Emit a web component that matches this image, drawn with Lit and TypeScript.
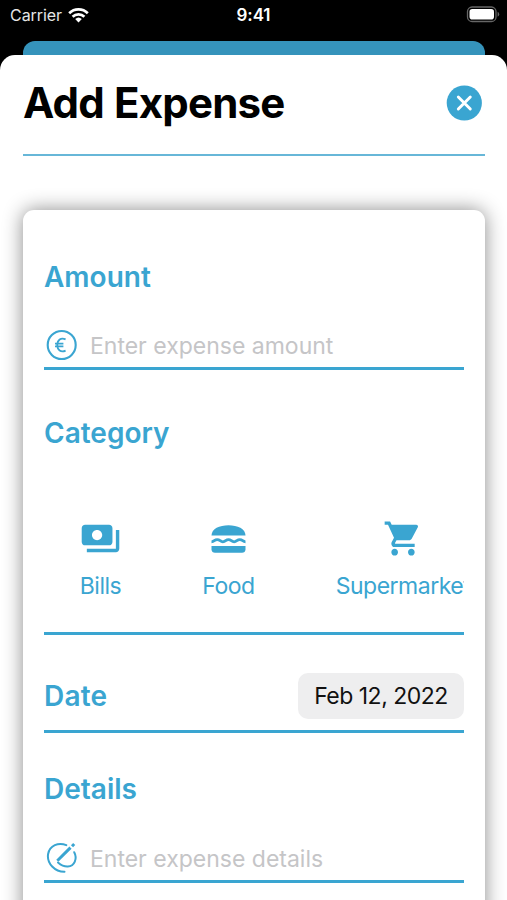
import { LitElement, html, css, svg } from "lit";
import { customElement } from "lit/decorators.js";

const wifi = svg`<svg width="21" height="16" viewBox="0 0 21 16"><g fill="none" stroke="#fff" stroke-width="2.7"><path d="M1.2 6.2 A13.2 13.2 0 0 1 19.8 6.2"/><path d="M4.6 9.7 A8.4 8.4 0 0 1 16.4 9.7"/></g><path d="M10.5 15.4 L7.2 12 A4.8 4.8 0 0 1 13.8 12 Z" fill="#fff"/></svg>`;
const battery = svg`<svg width="34" height="17" viewBox="0 0 34 17"><rect x="1.500" y="1" width="28.5" height="14.5" rx="4.6" fill="none" stroke="#666" stroke-width="1.3"/><rect x="3.500" y="3" width="24.5" height="10.5" rx="2.8" fill="#fff"/><path d="M31.6 5.8 q1.6 .8 1.6 2.5 t-1.6 2.5z" fill="#666"/></svg>`;
const close = svg`<svg width="36" height="36" viewBox="0 0 36 36"><circle cx="18.3" cy="18" r="17.600" fill="#3aa5d1"/><path d="M12.3 12 L24.3 24 M24.3 12 L12.3 24" stroke="#fff" stroke-width="2.9" stroke-linecap="round"/></svg>`;
const euro = svg`<svg width="32" height="32" viewBox="0 0 32 32" fill="none" stroke="#3aa5d1"><circle cx="15.7" cy="16" r="14" stroke-width="2.1"/><path d="M19.6 10.4 C14.8 8 11.3 11.2 11.3 16 C11.3 20.8 14.8 24 19.6 21.600 M9 14.6 H17.4 M9 17.4 H17.4" stroke-width="1.8"/></svg>`;
const pen = svg`<svg width="32" height="32" viewBox="0 0 32 32" fill="none" stroke="#3aa5d1" stroke-width="2" stroke-linecap="round"><path d="M20.3 3.2 C12.5 -.2 3.6 3.6 2.1 12 C.6 21.5 9 29.8 18.5 29.7"/><path d="M28.2 10.2 C31.6 16.5 28.6 24.2 21.8 24.6 C17.8 24.8 14.5 22.7 12 20.5"/><path d="M11.300 18.800 L24.500 5.600" stroke-width="3" stroke-linecap="butt"/><path d="M26 4.200 L28.2 2" stroke-width="3" stroke-linecap="butt"/></svg>`;
const bills = svg`<svg width="41" height="41" viewBox="0 0 24 24" fill="#3aa5d1"><path fill-rule="evenodd" d="M19 14V6c0-1.100-.9-2-2-2H3c-1.100 0-2 .9-2 2v8c0 1.100.9 2 2 2h14c1.100 0 2-.9 2-2zm-9-1c-1.660 0-3-1.340-3-3s1.340-3 3-3 3 1.340 3 3-1.340 3-3 3zm13-6v11c0 1.100-.9 2-2 2H4v-2h17V7h2z"/></svg>`;
const burger = svg`<svg width="35" height="28" viewBox="0 0 35 28" fill="#3aa5d1"><path d="M.5 10.600 C.5 3.800 8.500 .3 17.500 .3 S34.500 3.800 34.500 10.600 Z"/><path d="M.5 21 H34.500 V24.200 C34.500 26.500 33 27.800 31 27.800 H4 C2 27.800 .5 26.500 .5 24.200 Z"/><path d="M.5 16.800 C3.300 16.800 3.300 14.600 6.200 14.600 S9.100 16.800 11.900 16.800 S14.700 14.600 17.500 14.600 S20.300 16.800 23.100 16.800 S25.900 14.600 28.800 14.600 S31.700 16.800 34.500 16.800" fill="none" stroke="#3aa5d1" stroke-width="2.800"/></svg>`;
const cart = svg`<svg width="40" height="41" viewBox="0 0 24 24" preserveAspectRatio="none" fill="#3aa5d1"><path d="M7 18c-1.100 0-1.990.9-1.990 2S5.900 22 7 22s2-.9 2-2-.9-2-2-2zM1 2v2h2l3.600 7.590-1.350 2.450c-.16.28-.25.61-.25.96 0 1.100.9 2 2 2h12v-2H7.420c-.14 0-.25-.11-.25-.25l.03-.12.9-1.630h7.450c.75 0 1.410-.41 1.750-1.030l3.580-6.490c.08-.14.12-.31.12-.48 0-.55-.45-1-1-1H5.210l-.94-2H1zm16 16c-1.100 0-1.990.9-1.990 2s.89 2 1.990 2 2-.9 2-2-.9-2-2-2z"/></svg>`;

@customElement("app-root")
export class AppRoot extends LitElement {
  static styles = css`
    :host { display: block; height: 900px; overflow: hidden; background: #000; color: #000; font-family: Inter, "Liberation Sans", sans-serif; }
    * { box-sizing: border-box; white-space: nowrap; }
    svg { display: block; flex: none; }
    .status { height: 41px; padding: 0 7px 11px 10px; display: grid; grid-template-columns: 1fr auto 1fr; align-items: center; color: #fff; }
    .carrier { display: flex; align-items: center; gap: 6px; font-size: 16px; letter-spacing: -.05px; color: #e6e6e6; }
    .time { font-size: 17px; font-weight: 600; letter-spacing: -.1px; margin-right: 3px; }
    .battery { justify-self: end; margin-top: -2px; }
    .behind { height: 14px; margin: 0 22px 0 23px; border-radius: 12px 12px 0 0; background: #3593bb; }
    .sheet { height: 845px; background: #fff; border-radius: 15px 15px 0 0; padding: 0 22px 0 23px; overflow: hidden; }
    .header { height: 101px; padding: 0 3px 3px 0; display: flex; align-items: center; justify-content: space-between; border-bottom: 2px solid #67b7d8; }
    h1 { margin: 0; font-size: 42px; line-height: 50px; font-weight: 700; letter-spacing: -.8px; word-spacing: 1px; }
    .card { margin-top: 54px; height: 760px; padding: 49px 21px 0; border-radius: 11px; background: #fff; box-shadow: 0 0 20px rgba(0,0,0,.46); }
    h2 { margin: 0; height: 36px; line-height: 36px; font-size: 28px; font-weight: 600; color: #3aa5d1; }
    .line { border-bottom: 3px solid #3aa5d1; }
    .field { height: 47px; margin: 28px 0 45px; padding-left: 2px; display: flex; align-items: center; gap: 12px; font-size: 23px; color: #c5c5c7; }
    .details { margin-top: 29px; }
    .hint { padding-top: 1px; }
    .categories { height: 184px; padding: 67px 0 0 36px; display: flex; overflow: hidden; color: #3aa5d1; font-size: 23px; letter-spacing: -.5px; }
    .category { flex: none; display: flex; flex-direction: column; align-items: center; width: 41px; }
    .icon { height: 41px; display: flex; align-items: center; }
    .name { margin-top: 12px; line-height: 30px; }
    .food { width: 53px; margin-left: 81px; }
    .market { width: 132px; margin-left: 82px; }
    .date { height: 98px; padding-top: 27px; margin-bottom: 38px; display: flex; align-items: center; justify-content: space-between; }
    .date h2 { letter-spacing: .2px; }
    .picker { width: 166px; height: 46px; border-radius: 10px; background: #eeeeef; font-size: 23px; line-height: 46px; letter-spacing: -.5px; text-align: center; color: #111; }
  `;
  render() {
    return html`
      <div class="status"><div class="carrier"><span>Carrier</span>${wifi}</div><div class="time">9:41</div><div class="battery">${battery}</div></div>
      <div class="behind"></div>
      <main class="sheet">
        <header class="header"><h1>Add Expense</h1>${close}</header>
        <section class="card">
          <h2>Amount</h2>
          <div class="field line">${euro}<span class="hint">Enter expense amount</span></div>
          <h2>Category</h2>
          <div class="categories line">
            <div class="category"><div class="icon">${bills}</div><div class="name">Bills</div></div>
            <div class="category food"><div class="icon">${burger}</div><div class="name">Food</div></div>
            <div class="category market"><div class="icon">${cart}</div><div class="name">Supermarket</div></div>
          </div>
          <div class="date line"><h2>Date</h2><div class="picker">Feb 12, 2022</div></div>
          <h2>Details</h2>
          <div class="field details line">${pen}<span class="hint">Enter expense details</span></div>
        </section>
      </main>`;
  }
}
